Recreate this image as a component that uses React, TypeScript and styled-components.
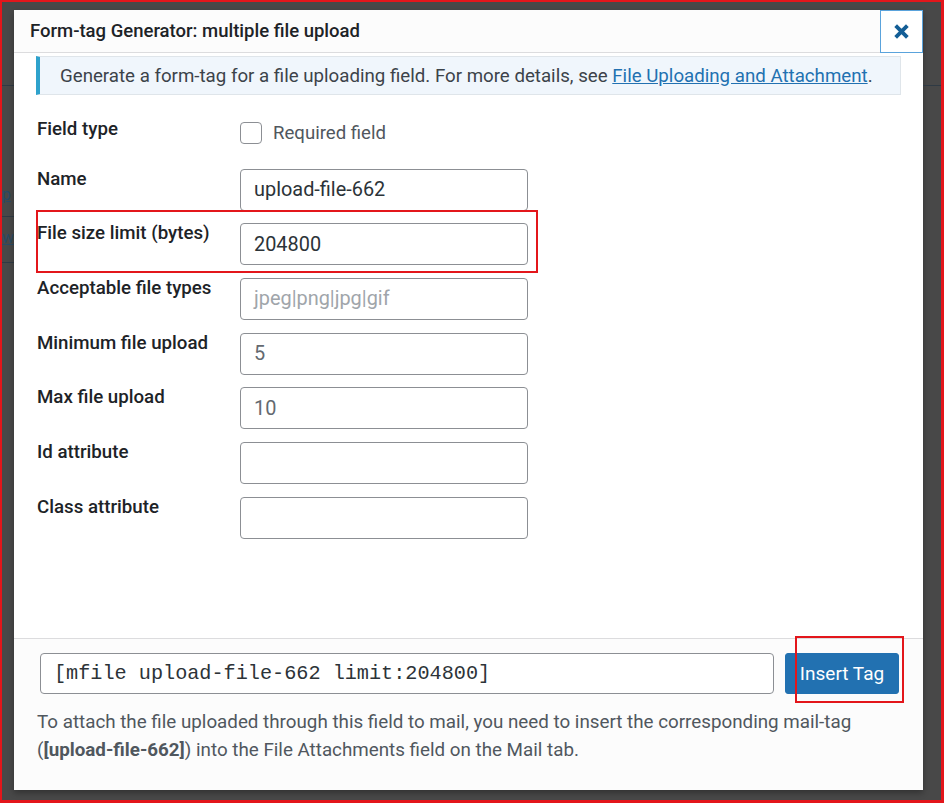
import React from "react";
import styled, { createGlobalStyle } from "styled-components";

const Global = createGlobalStyle`
  html, body { margin: 0; padding: 0; background: #484848; }
  body { font-family: Roboto, "Noto Sans", Arial, sans-serif; }
  * { box-sizing: border-box; }
`;

const Frame = styled.div`
  position: relative;
  width: 944px;
  height: 803px;
  border-style: solid;
  border-color: #e3161b;
  border-width: 2px 3px 3px 2px;
  background: #484848;
  display: flex;
  overflow: hidden;
`;

const Strip = styled.div<{ $w: number }>`
  width: ${(p) => p.$w}px;
  flex: none;
  display: flex;
  flex-direction: column;
  overflow: hidden;
`;

const StripLine = styled.div<{ $top: number }>`
  margin-top: ${(p) => p.$top}px;
  height: 1px;
  background: #2f3a44;
  flex: none;
`;

const StripText = styled.div<{ $top: number }>`
  margin-top: ${(p) => p.$top}px;
  font-size: 16px;
  line-height: 18px;
  color: #2a4a64;
  text-decoration: underline;
  white-space: nowrap;
  flex: none;
`;

const Modal = styled.div`
  margin-top: 8px;
  width: 909px;
  height: 780px;
  flex: none;
  background: #fff;
  display: flex;
  flex-direction: column;
  box-shadow: 0 3px 6px rgba(0, 0, 0, 0.3);
`;

const Header = styled.div`
  height: 43px;
  flex: none;
  display: flex;
  align-items: stretch;
  background: #fcfcfc;
  border-bottom: 1px solid #dcdcde;
`;

const Title = styled.h1`
  flex: 1;
  margin: 0;
  padding-left: 16px;
  display: flex;
  align-items: center;
  font-size: 18.5px;
  font-weight: 500;
  color: #1d2327;
`;

const CloseButton = styled.button`
  width: 43px;
  height: 43px;
  flex: none;
  border: 1px solid #5aa3dc;
  background: #fff;
  display: flex;
  align-items: center;
  justify-content: center;
  padding: 0;
  margin-bottom: -1px;
  cursor: pointer;
`;

const Body = styled.div`
  flex: 1;
  padding: 3px 22px 0 22px;
  display: flex;
  flex-direction: column;
`;

const Notice = styled.div`
  height: 39px;
  display: flex;
  align-items: center;
  padding-left: 20px;
  background: #f0f6fc;
  border: 1px solid #dfe5ea;
  border-left: 4px solid #2ea2cc;
  font-size: 18.7px;
  color: #3c434a;
  white-space: nowrap;
`;

const Link = styled.a`
  color: #2271b1;
  text-decoration: underline;
`;

const Form = styled.div`
  margin-top: 24px;
  display: flex;
  flex-direction: column;
  gap: 12.67px;
`;

const Row = styled.div<{ $min?: number }>`
  display: grid;
  grid-template-columns: 203px 288px;
  align-items: start;
  min-height: ${(p) => p.$min ?? 42}px;
  padding-left: 1px;
`;

const Label = styled.div`
  font-size: 18.7px;
  font-weight: 500;
  color: #1d2327;
  line-height: 20px;
  white-space: nowrap;
`;

const CheckWrap = styled.label`
  display: flex;
  align-items: center;
  gap: 11px;
  padding-top: 3px;
  font-size: 18.6px;
  color: #50575e;
`;

const Box = styled.span`
  width: 22px;
  height: 22px;
  border: 1.5px solid #8c8f94;
  border-radius: 4px;
  background: #fff;
  display: inline-block;
`;

const Input = styled.div<{ $tone?: "dark" | "mid" | "light" }>`
  height: 42px;
  width: 288px;
  border: 1px solid #8c8f94;
  border-radius: 4px;
  padding: 0 13px;
  display: flex;
  align-items: center;
  font-size: 19.9px;
  color: ${(p) =>
    p.$tone === "light" ? "#a0a5aa" : p.$tone === "mid" ? "#646970" : "#2c3338"};
`;

const Footer = styled.div`
  flex: none;
  background: #fcfcfc;
  border-top: 1px solid #dcdcde;
  padding: 14px 23px 0 26px;
  height: 152px;
`;

const TagRow = styled.div`
  display: flex;
  gap: 11px;
  align-items: center;
`;

const TagInput = styled.div`
  width: 734px;
  height: 41px;
  border: 1px solid #8c8f94;
  border-radius: 4px;
  background: #fff;
  display: flex;
  align-items: center;
  padding-left: 13px;
  font-family: "Liberation Mono", "DejaVu Sans Mono", monospace;
  font-size: 20.2px;
  color: #2c3338;
`;

const InsertButton = styled.button`
  width: 114px;
  height: 41px;
  border: 1px solid #2271b1;
  border-radius: 3px;
  background: #2271b1;
  color: #fff;
  font-family: Roboto, sans-serif;
  font-size: 19px;
  padding: 0;
`;

const Desc = styled.p`
  margin: 14px 0 0 -3px;
  font-size: 18.8px;
  line-height: 28px;
  color: #50575e;
  white-space: nowrap;
`;

const Highlight = styled.div<{ $x: number; $y: number; $w: number; $h: number }>`
  position: absolute;
  left: ${(p) => p.$x}px;
  top: ${(p) => p.$y}px;
  width: ${(p) => p.$w}px;
  height: ${(p) => p.$h}px;
  border: 2px solid #e3161b;
  pointer-events: none;
`;

const CloseIcon = () => (
  <svg width="17" height="17" viewBox="0 0 16 16">
    <path d="M2.5 2.5 L13.5 13.5 M13.5 2.5 L2.5 13.5" stroke="#135e96" strokeWidth="3.6" strokeLinecap="butt" />
  </svg>
);

type Field = { label: string; value: string; tone?: "dark" | "mid" | "light" };

const fields: Field[] = [
  { label: "Name", value: "upload-file-662" },
  { label: "File size limit (bytes)", value: "204800" },
  { label: "Acceptable file types", value: "jpeg|png|jpg|gif", tone: "light" },
  { label: "Minimum file upload", value: "5", tone: "mid" },
  { label: "Max file upload", value: "10", tone: "mid" },
  { label: "Id attribute", value: "" },
  { label: "Class attribute", value: "" },
];

export default function App() {
  return (
    <>
      <Global />
      <Frame>
        <Strip $w={12}>
          <StripLine $top={83} />
          <StripText $top={100}>p</StripText>
          <StripLine $top={12} />
          <StripText $top={12}>w</StripText>
          <StripLine $top={15} />
        </Strip>
        <Modal>
          <Header>
            <Title>Form-tag Generator: multiple file upload</Title>
            <CloseButton aria-label="Close">
              <CloseIcon />
            </CloseButton>
          </Header>
          <Body>
            <Notice>
              Generate a form-tag for a file uploading field. For more details, see&nbsp;
              <Link href="#">File Uploading and Attachment</Link>.
            </Notice>
            <Form>
              <Row $min={37}>
                <Label>Field type</Label>
                <CheckWrap>
                  <Box />
                  Required field
                </CheckWrap>
              </Row>
              {fields.map((f) => (
                <Row key={f.label}>
                  <Label>{f.label}</Label>
                  <Input $tone={f.tone}>{f.value}</Input>
                </Row>
              ))}
            </Form>
          </Body>
          <Footer>
            <TagRow>
              <TagInput>[mfile upload-file-662 limit:204800]</TagInput>
              <InsertButton>Insert Tag</InsertButton>
            </TagRow>
            <Desc>
              To attach the file uploaded through this field to mail, you need to insert the corresponding mail-tag
              <br />
              (<b>[upload-file-662]</b>) into the File Attachments field on the Mail tab.
            </Desc>
          </Footer>
        </Modal>
        <Strip $w={18}>
          <StripLine $top={83} />
        </Strip>
        <Highlight $x={34} $y={208} $w={502} $h={63} />
        <Highlight $x={793} $y={634} $w={109} $h={67} />
      </Frame>
    </>
  );
}
